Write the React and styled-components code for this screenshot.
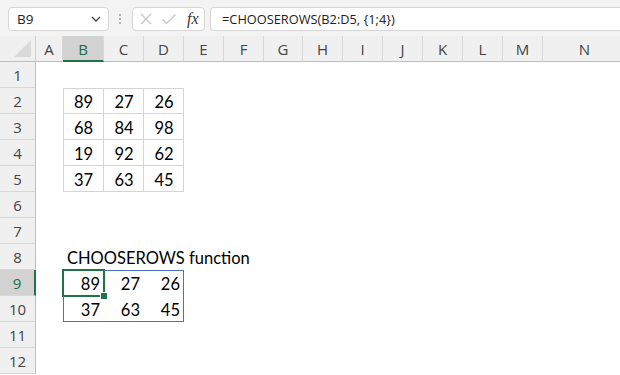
import React from 'react';
import styled, { createGlobalStyle } from 'styled-components';

const Global = createGlobalStyle`
  html, body {
    margin: 0;
    padding: 0;
    background: #ffffff;
    overflow: hidden;
  }
`;

const Page = styled.div`
  width: 620px;
  height: 375px;
  overflow: hidden;
  font-family: "Open Sans", "Noto Sans", sans-serif;
`;

const Bar = styled.div`
  height: 36px;
  background: #f3f3f3;
  display: flex;
  align-items: flex-start;
  padding: 7px 0 0 8px;
  box-sizing: border-box;
`;

const NameBox = styled.div`
  width: 101px;
  height: 24px;
  box-sizing: border-box;
  background: #fff;
  border: 1px solid #d6d6d6;
  border-radius: 4px;
  display: flex;
  align-items: center;
  justify-content: space-between;
  padding: 0 6px 0 8px;
  font-size: 13.5px;
  color: #222;
`;

const Dots = styled.div`
  width: 22px;
  height: 24px;
  display: flex;
  flex-direction: column;
  align-items: center;
  justify-content: center;
  gap: 2px;
  span {
    width: 2px;
    height: 2px;
    background: #9a9a9a;
    border-radius: 1px;
  }
`;

const FxBox = styled.div`
  width: 73px;
  height: 24px;
  box-sizing: border-box;
  background: #fff;
  border: 1px solid #d6d6d6;
  border-radius: 4px;
  display: flex;
  align-items: center;
  padding: 0 0 0 6px;
  gap: 8px;
  margin-left: 1px;
`;

const Fx = styled.span`
  font-family: "Liberation Serif", serif;
  font-style: italic;
  font-size: 16px;
  color: #333;
  margin-left: 2px;
`;

const Formula = styled.div`
  flex: 1;
  height: 24px;
  margin-left: 5px;
  box-sizing: border-box;
  background: #fff;
  border: 1px solid #d6d6d6;
  border-right: none;
  border-radius: 4px 0 0 4px;
  display: flex;
  align-items: center;
  padding-left: 11px;
  font-size: 12.8px;
  color: #222;
`;

const Sheet = styled.div`
  display: grid;
  grid-template-columns: ${p => p.$cols.map(c => c + 'px').join(' ')};
  grid-template-rows: 26px repeat(12, 26px);
`;

const Corner = styled.div`
  background: #f0f0f0;
  border-right: 1px solid #cfcfcf;
  border-bottom: 1px solid #bdbdbd;
  position: relative;
  &::after {
    content: '';
    position: absolute;
    right: 4px;
    bottom: 4px;
    border-left: 17px solid transparent;
    border-bottom: 17px solid #dadada;
  }
`;

const ColHead = styled.div`
  background: ${p => (p.$sel ? '#d2d2d2' : '#f0f0f0')};
  color: ${p => (p.$sel ? '#1b6e43' : '#444')};
  border-right: 1px solid #d8d8d8;
  border-bottom: ${p => (p.$sel ? '2px solid #217346' : '1px solid #bdbdbd')};
  box-sizing: border-box;
  display: flex;
  align-items: center;
  justify-content: center;
  font-size: 15px;
  padding-top: 1px;
`;

const RowHead = styled.div`
  background: ${p => (p.$sel ? '#d2d2d2' : '#f0f0f0')};
  color: ${p => (p.$sel ? '#1b6e43' : '#444')};
  border-right: ${p => (p.$sel ? '2px solid #217346' : '1px solid #bdbdbd')};
  border-bottom: 1px solid #d8d8d8;
  box-sizing: border-box;
  display: flex;
  align-items: center;
  justify-content: center;
  font-size: 15px;
`;

const Cell = styled.div`
  position: relative;
  display: flex;
  align-items: center;
  justify-content: ${p => p.$align || 'flex-start'};
  padding: 1px 4px 0;
  box-sizing: border-box;
  white-space: nowrap;
  overflow: visible;
  font-family: Lato, "Liberation Sans", sans-serif;
  font-size: 16.5px;
  color: #000;
  box-shadow: ${p => p.$lines || 'none'};
`;

const Active = styled.div`
  position: absolute;
  left: -1px;
  top: -1px;
  right: -1px;
  bottom: -1px;
  border: 2px solid #217346;
  pointer-events: none;
  &::after {
    content: '';
    position: absolute;
    right: -5px;
    bottom: -5px;
    width: 6px;
    height: 6px;
    background: #217346;
    border: 1px solid #fff;
  }
`;

const cols = [36, 27, 41, 40, 40, 40, 40, 39, 40, 40, 40, 40, 40, 40, 84];
const letters = 'ABCDEFGHIJKLMN'.split('');

const source = [
  [89, 27, 26],
  [68, 84, 98],
  [19, 92, 62],
  [37, 63, 45],
];
const result = [source[0], source[3]];

const GRAY = '#d4d4d4';
const BLUE = '#4a72c0';

function lines(color, { t, r, b, l }) {
  const s = [];
  if (t) s.push(`inset 0 1px 0 ${color}`);
  if (r) s.push(`inset -1px 0 0 ${color}`);
  if (b) s.push(`inset 0 -1px 0 ${color}`);
  if (l) s.push(`inset 1px 0 0 ${color}`);
  return s.length ? s.join(', ') : undefined;
}

function cellFor(row, col) {
  // col: 0 = A
  const c = col - 1; // 0 = B
  if (row >= 2 && row <= 5 && c >= 0 && c <= 2) {
    return {
      text: source[row - 2][c],
      align: 'center',
      lines: lines(GRAY, { t: row === 2, r: true, b: true, l: c === 0 }),
    };
  }
  if (row === 8 && c === 0) {
    return { text: 'CHOOSEROWS function' };
  }
  if (row >= 9 && row <= 10 && c >= 0 && c <= 2) {
    return {
      text: result[row - 9][c],
      align: 'flex-end',
      lines: lines(BLUE, { t: row === 9, r: c === 2, b: row === 10, l: c === 0 }),
      active: row === 9 && c === 0,
    };
  }
  return null;
}

function Chevron() {
  return (
    <svg width="12" height="12" viewBox="0 0 12 12">
      <path d="M2 4 L6 8 L10 4" fill="none" stroke="#444" strokeWidth="1.3" />
    </svg>
  );
}

function Cross() {
  return (
    <svg width="14" height="14" viewBox="0 0 14 14">
      <path d="M2 2 L12 12 M12 2 L2 12" stroke="#c4c4c4" strokeWidth="1.2" />
    </svg>
  );
}

function Check() {
  return (
    <svg width="16" height="14" viewBox="0 0 16 14">
      <path d="M1.5 7.5 L5.5 11.5 L14.5 2.5" fill="none" stroke="#c4c4c4" strokeWidth="1.2" />
    </svg>
  );
}

export default function App() {
  const cells = [];
  cells.push(<Corner key="corner" />);
  letters.forEach(l => {
    cells.push(
      <ColHead key={'h' + l} $sel={l === 'B'}>
        {l}
      </ColHead>
    );
  });
  for (let r = 1; r <= 12; r++) {
    cells.push(
      <RowHead key={'r' + r} $sel={r === 9}>
        {r}
      </RowHead>
    );
    letters.forEach((l, ci) => {
      const info = cellFor(r, ci);
      cells.push(
        <Cell key={l + r} $align={info?.align} $lines={info?.lines}>
          {info?.text}
          {info?.active && <Active />}
        </Cell>
      );
    });
  }

  return (
    <Page>
      <Global />
      <Bar>
        <NameBox>
          B9
          <Chevron />
        </NameBox>
        <Dots>
          <span />
          <span />
          <span />
        </Dots>
        <FxBox>
          <Cross />
          <Check />
          <Fx>fx</Fx>
        </FxBox>
        <Formula>=CHOOSEROWS(B2:D5, {'{1;4}'})</Formula>
      </Bar>
      <Sheet $cols={cols}>{cells}</Sheet>
    </Page>
  );
}
